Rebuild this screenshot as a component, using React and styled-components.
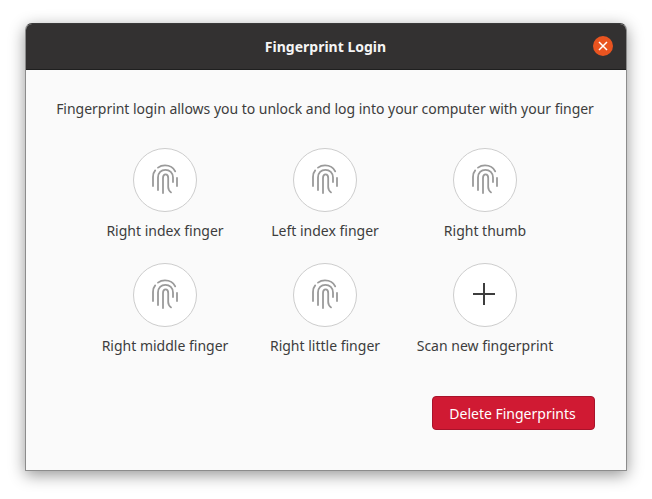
import React from 'react';
import styled, { createGlobalStyle } from 'styled-components';

const GlobalStyle = createGlobalStyle`
    html, body {
        margin: 0;
        padding: 0;
        background-color: #ffffff;
    }
    body {
        width: 652px;
        height: 499px;
        overflow: hidden;
        font-family: "Noto Sans", "Open Sans", "DejaVu Sans", sans-serif;
    }
`;

const fingers = [
    { label: 'Right index finger' },
    { label: 'Left index finger' },
    { label: 'Right thumb' },
    { label: 'Right middle finger' },
    { label: 'Right little finger' },
    { label: 'Scan new fingerprint', add: true },
];

const FingerprintIcon = () => (
    <svg width="34" height="36" viewBox="0 0 34 36" fill="none" stroke="#9a9a9a" strokeWidth="1.8" strokeLinecap="round">
        <path d="M5 24 V15 C5 12 5.8 10 7.2 8.4" />
        <path d="M10 5.6 C12 4.1 14.4 3.4 17 3.4 C21.8 3.4 25.4 5.6 27.2 9.4" />
        <path d="M10 28 V15.5 C10 10.8 13.2 7.8 17.4 7.8 C21.6 7.8 25 10.8 25 15.5 V20" />
        <path d="M15 31 V16 C15 13.6 16 12.4 17.6 12.4 C19.2 12.4 20.2 13.6 20.2 16 V25 C20.2 27.4 21.2 29 23 30.4" />
        <path d="M29 16 V24" />
    </svg>
);

const PlusIcon = () => (
    <svg width="24" height="24" viewBox="0 0 24 24" fill="none" stroke="#3d3d3d" strokeWidth="2">
        <path d="M11 0 V22 M0 11 H22" />
    </svg>
);

const App = () => {
    return (
        <>
            <GlobalStyle />
            <Window>
                <TitleBar>
                    <Title>Fingerprint Login</Title>
                    <CloseButton aria-label="Close">
                        <svg width="10" height="10" viewBox="0 0 10 10" fill="none" stroke="#ffffff" strokeWidth="1.5">
                            <path d="M1 1 L9 9 M9 1 L1 9" />
                        </svg>
                    </CloseButton>
                </TitleBar>
                <Content>
                    <Description>Fingerprint login allows you to unlock and log into your computer with your finger</Description>
                    <FingerGrid>
                        {fingers.map((finger) => (
                            <FingerItem key={finger.label}>
                                <FingerCircle>
                                    {finger.add ? <PlusIcon /> : <FingerprintIcon />}
                                </FingerCircle>
                                <FingerLabel>{finger.label}</FingerLabel>
                            </FingerItem>
                        ))}
                    </FingerGrid>
                    <Footer>
                        <DeleteButton>Delete Fingerprints</DeleteButton>
                    </Footer>
                </Content>
            </Window>
        </>
    );
};

const Window = styled.div`
    box-sizing: border-box;
    width: 602px;
    height: 448px;
    margin: 23px 0 0 25px;
    display: flex;
    flex-direction: column;
    background-color: #fafafa;
    border: 1px solid #8c8c8c;
    border-top-color: #3a3a3a;
    border-radius: 7px 7px 1px 1px;
    box-shadow: 0 4px 16px rgba(0, 0, 0, 0.42);
    overflow: hidden;
`;
const TitleBar = styled.div`
    flex: none;
    height: 46px;
    position: relative;
    display: flex;
    align-items: center;
    justify-content: center;
    background-color: #333131;
    border-bottom: 1px solid #1f1f1f;
    box-sizing: border-box;
`;
const Title = styled.div`
    color: #f5f5f5;
    font-size: 14px;
    font-weight: 700;
    margin-right: 1px;
`;
const CloseButton = styled.button`
    position: absolute;
    right: 13px;
    top: 12px;
    width: 20px;
    height: 20px;
    padding: 0;
    border: none;
    border-radius: 50%;
    background-color: #e95420;
    display: flex;
    align-items: center;
    justify-content: center;
`;
const Content = styled.div`
    flex: 1;
    display: flex;
    flex-direction: column;
    padding: 29px 31px 0 59px;
`;
const Description = styled.p`
    margin: 0 -31px 29px -59px;
    padding-right: 2px;
    text-align: center;
    font-size: 14px;
    line-height: 20px;
    letter-spacing: -0.025px;
    color: #3d3d3d;
`;
const FingerGrid = styled.div`
    display: grid;
    grid-template-columns: repeat(3, 160px);
    grid-auto-rows: 115px;
`;
const FingerItem = styled.div`
    display: flex;
    flex-direction: column;
    align-items: center;
`;
const FingerCircle = styled.div`
    box-sizing: border-box;
    width: 64px;
    height: 64px;
    border-radius: 50%;
    border: 1px solid #cdcdcd;
    background-color: #ffffff;
    display: flex;
    align-items: center;
    justify-content: center;
`;
const FingerLabel = styled.div`
    margin-top: 9px;
    font-size: 14px;
    line-height: 20px;
    color: #3d3d3d;
`;
const Footer = styled.div`
    display: flex;
    justify-content: flex-end;
    margin-top: 18px;
`;
const DeleteButton = styled.button`
    box-sizing: border-box;
    width: 163px;
    height: 34px;
    padding: 0 8px 0 6px;
    border: 1px solid #a8132b;
    border-radius: 4px;
    background-color: #d01a33;
    color: #ffffff;
    font-family: inherit;
    font-size: 14px;
`;

export default App;
